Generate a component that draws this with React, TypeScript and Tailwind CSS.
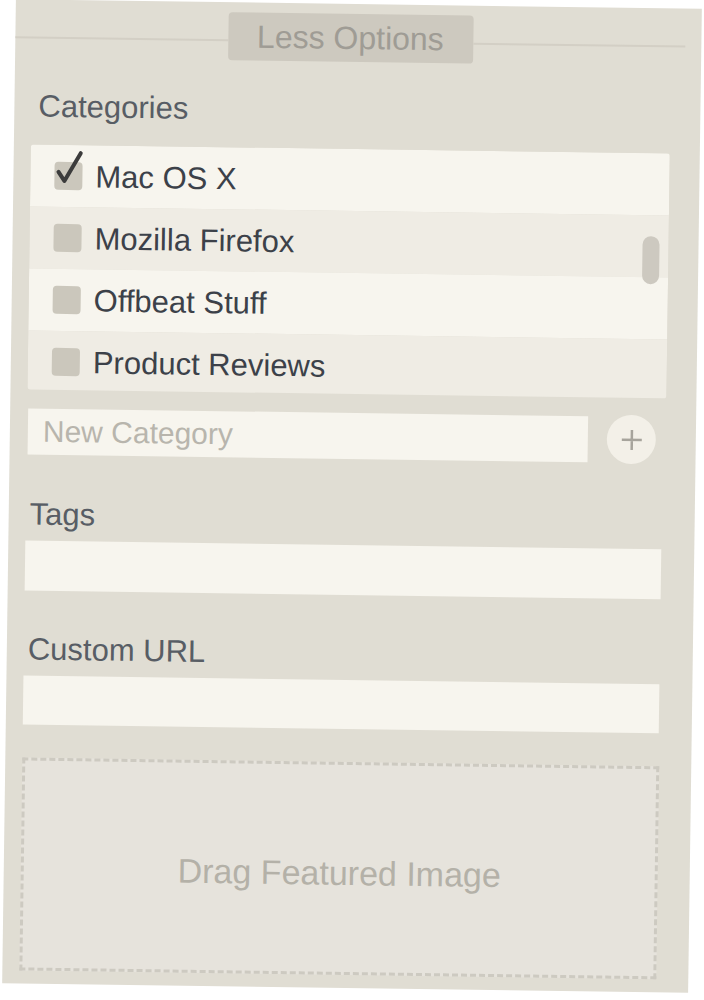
const font = "font-['Liberation_Sans',Arial,sans-serif]"

const categories = [
  { name: 'Mac OS X', checked: true },
  { name: 'Mozilla Firefox', checked: false },
  { name: 'Offbeat Stuff', checked: false },
  { name: 'Product Reviews', checked: false },
]

function Checkbox({ checked }: { checked: boolean }) {
  return (
    <div className="relative h-[28px] w-[28px] shrink-0 rounded-[4px] bg-[#cbc7bc]">
      {checked && (
        <svg className="absolute left-0 top-[-12px] overflow-visible" width="30" height="40" viewBox="0 0 30 40">
          <path d="M4 22 L10 31 L26 3" fill="none" stroke="#3c3c3c" strokeWidth="4" strokeLinecap="round" strokeLinejoin="round" />
        </svg>
      )}
    </div>
  )
}

export default function App() {
  return (
    <div className={`w-[704px] h-[1000px] overflow-hidden bg-white pt-[4px] pl-[9px] ${font}`}>
      <div className="w-[686px] h-[984px] rotate-[0.8deg] bg-[#e0ddd3] flex flex-col">
        {/* header */}
        <div className="flex items-start pt-[10px] pr-[16px]">
          <div className="flex-1 h-[2px] mt-[27px] bg-[#d3cfc5]" />
          <button type="button" className="w-[245px] h-[48px] rounded-[4px] bg-[#cdc9bf] text-[#9f9c95] text-[32px] leading-none">
            Less Options
          </button>
          <div className="flex-1 h-[2px] mt-[27px] bg-[#d3cfc5]" />
        </div>

        <div className="ml-[24px] mt-[33px] text-[31px] leading-none text-[#585d65]">Categories</div>

        {/* category list */}
        <div className="relative ml-[17px] mt-[23px] w-[639px] h-[245px] overflow-hidden rounded-[3px]">
          {categories.map((c, i) => (
            <div key={c.name} className={`h-[62px] flex items-center gap-[13px] pl-[24px] ${i % 2 === 0 ? 'bg-[#f7f5ee]' : 'bg-[#efece4]'}`}>
              <Checkbox checked={c.checked} />
              <span className="text-[31px] leading-none text-[#3c4149]">{c.name}</span>
            </div>
          ))}
          <div className="absolute right-[9px] top-[83px] w-[17px] h-[48px] rounded-full bg-[#cdc9c0]" />
        </div>

        {/* new category */}
        <div className="ml-[18px] mt-[17px] flex items-center gap-[19px]">
          <div className="w-[560px] h-[46px] bg-[#f7f5ee] flex items-center pl-[15px] text-[30px] leading-none text-[#b8b5ad]">New Category</div>
          <button type="button" className="w-[49px] h-[49px] rounded-full bg-[#f3f0e8] flex items-center justify-center">
            <svg width="24" height="24" viewBox="0 0 24 24">
              <path d="M12 2 V22 M2 12 H22" stroke="#a7a49c" strokeWidth="2.5" />
            </svg>
          </button>
        </div>

        <div className="ml-[21px] mt-[43px] text-[31px] leading-none text-[#585d65]">Tags</div>
        <div className="ml-[17px] mt-[11px] w-[636px] h-[50px] bg-[#f7f5ee]" />

        <div className="ml-[21px] mt-[43px] text-[31px] leading-none text-[#585d65]">Custom URL</div>
        <div className="ml-[17px] mt-[11px] w-[636px] h-[49px] bg-[#f7f5ee]" />

        {/* drop zone */}
        <div className="ml-[17px] mt-[33px] w-[637px] h-[213px] border-[3px] border-dashed border-[#cdcac1] bg-[#e6e3dc] flex items-center justify-center pt-[8px]">
          <span className="text-[34px] leading-none text-[#b4b1a8]">Drag Featured Image</span>
        </div>
      </div>
    </div>
  )
}
